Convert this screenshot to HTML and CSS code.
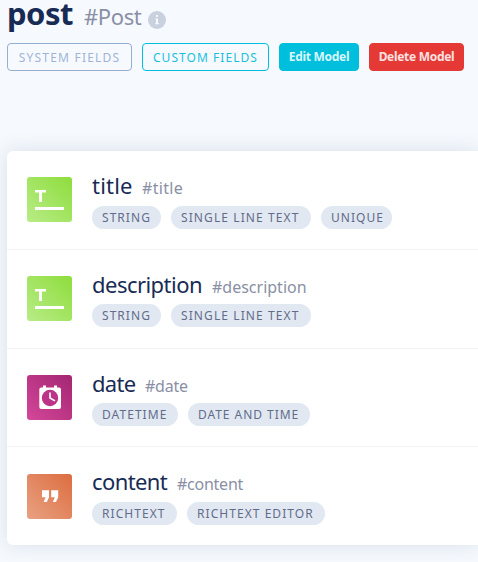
FILE: index.html
```html
<!DOCTYPE html>
<html lang="en">
<head>
<meta charset="utf-8">
<title>post</title>
<link rel="stylesheet" href="styles.css">
</head>
<body>
<header class="heading">
  <h1>post</h1><span class="model-id">#Post</span>
  <svg class="info" viewBox="0 0 18 18"><circle cx="9" cy="9" r="9" fill="#c9d1df"/><path d="M8 4h2v2H8zM7.500 7.500H10V12h.8v1.200H7.200V12H8V8.700h-.5z" fill="#f6faff"/></svg>
</header>
<nav class="actions">
  <button class="btn system">SYSTEM FIELDS</button>
  <button class="btn custom">CUSTOM FIELDS</button>
  <button class="btn edit">Edit Model</button>
  <button class="btn delete">Delete Model</button>
</nav>
<main class="card">
  <section class="row">
    <svg class="icon green" viewBox="0 0 45 45"><path d="M8 13h11v2.600h-4V25h-3v-9.400H8zM8 30h29v3H8z" fill="#fff"/></svg>
    <div class="field">
      <div class="names"><span class="name n-title">title</span><span class="id i-title">#title</span></div>
      <div class="tags"><span class="tag w-string">STRING</span><span class="tag w-line">SINGLE LINE TEXT</span><span class="tag w-unique">UNIQUE</span></div>
    </div>
  </section>
  <section class="row raised">
    <svg class="icon green" viewBox="0 0 45 45"><path d="M8 13h11v2.600h-4V25h-3v-9.400H8zM8 30h29v3H8z" fill="#fff"/></svg>
    <div class="field">
      <div class="names"><span class="name n-description">description</span><span class="id i-description">#description</span></div>
      <div class="tags"><span class="tag w-string">STRING</span><span class="tag w-line">SINGLE LINE TEXT</span></div>
    </div>
  </section>
  <section class="row raised short">
    <svg class="icon pink" viewBox="0 0 45 45"><path d="M16 10.500h3v2h8v-2h3v2h2a2 2 0 0 1 2 2V32a2 2 0 0 1-2 2H14.300a2 2 0 0 1-2-2V14.500a2 2 0 0 1 2-2H16z" fill="#fff"/><circle cx="23" cy="23" r="8.200" fill="#bb3487"/><path d="M23 17.500V23l5 2.900" fill="none" stroke="#fff" stroke-width="1.600"/></svg>
    <div class="field">
      <div class="names"><span class="name n-date">date</span><span class="id i-date">#date</span></div>
      <div class="tags"><span class="tag w-datetime">DATETIME</span><span class="tag w-dateand">DATE AND TIME</span></div>
    </div>
  </section>
  <section class="row short">
    <svg class="icon orange" viewBox="0 0 45 45"><path d="M15 16.300h7v7L19.800 28h-3.200l2-4.700H15zM24.200 16.300h7v7L29 28h-3.200l2-4.700h-3.600z" fill="#fff"/></svg>
    <div class="field">
      <div class="names"><span class="name n-content">content</span><span class="id i-content">#content</span></div>
      <div class="tags"><span class="tag w-rich">RICHTEXT</span><span class="tag w-editor">RICHTEXT EDITOR</span></div>
    </div>
  </section>
</main>
</body>
</html>
```
FILE: styles.css
```css
* { box-sizing: border-box; }
html { background: #f6faff; }
body {
  margin: 0;
  height: 562px;
  overflow: hidden;
  background: #f6faff;
  font-family: "Noto Sans", "Open Sans", sans-serif;
}
.heading {
  display: flex;
  height: 43px;
  padding-left: 7px;
}
h1 {
  margin: 0;
  width: 77px;
  height: 27px;
  font-size: 31px;
  line-height: 27px;
  letter-spacing: -0.5px;
  color: #172b54;
}
.model-id {
  width: 64px;
  font-size: 22px;
  line-height: 32px;
  letter-spacing: -0.4px;
  color: #8a8fa5;
}
.info { width: 18px; height: 18px; margin-top: 11px; }
.actions { display: flex; gap: 10px; padding-left: 7px; }
.btn {
  height: 28px;
  padding: 0;
  border: 1px solid;
  border-radius: 4px;
  background: transparent;
  font: 12px/27px "Noto Sans", sans-serif;
  letter-spacing: 1.2px;
  white-space: nowrap;
}
.system { width: 125px; color: #9fb4d6; border-color: #97adcf; }
.custom { width: 127px; color: #19c0dc; border-color: #00bfdd; letter-spacing: 1.050px; }
.edit, .delete { font-size: 12px; font-weight: 700; line-height: 26px; letter-spacing: -0.300px; }
.edit { width: 80px; background: #00bfdd; border-color: #00bfdd; color: #d9f7fb; }
.delete { width: 95px; background: #e53935; border-color: #e53935; color: #fce1e0; }
.card {
  height: 394px;
  margin: 80px 0 0 7px;
  border-radius: 6px 0 0 6px;
  background: #fff;
  box-shadow: 0 0 20px rgba(50, 65, 85, 0.15);
}
.row {
  display: flex;
  height: 99px;
  padding: 26px 20px 0;
  border-bottom: 1px solid #f0f2f5;
}
.short { height: 98px; }
.row:last-child { border-bottom: 0; }
.icon { flex: none; width: 45px; height: 45px; border-radius: 3px; }
.row:last-child .icon { margin-top: 1px; }
.green { background: linear-gradient(45deg, #b8ec87, #8edd3d); }
.pink { background: linear-gradient(45deg, #d54799, #a32673); }
.orange { background: linear-gradient(45deg, #e9a183, #dc6d3f); }
.field { margin-left: 20px; }
.names {
  display: flex;
  align-items: baseline;
  height: 29px;
  margin-top: -8px;
  line-height: 32px;
  white-space: nowrap;
}
.name { margin-right: 10px; font-size: 22px; color: #172b54; }
.n-title { width: 40px; letter-spacing: 0.200px; }
.n-description { width: 110px; letter-spacing: -0.530px; }
.n-date { width: 43px; letter-spacing: -0.700px; }
.n-content { width: 75px; letter-spacing: -0.600px; }
.id { font-size: 16px; color: #8a8fa5; }
.i-title { letter-spacing: 0.300px; }
.i-date, .i-content { letter-spacing: -0.250px; }
.tags { display: flex; gap: 10px; margin-top: 8px; }
.raised .tags { margin-top: 7px; }
.tag {
  height: 23px;
  padding-left: 10px;
  border-radius: 12px;
  background: #e1e8f2;
  font-size: 12px;
  line-height: 24px;
  letter-spacing: 1.050px;
  white-space: nowrap;
  color: #626c89;
}
.w-string { width: 69px; }
.w-line { width: 140px; letter-spacing: 1.100px; }
.w-unique { width: 71px; }
.w-datetime { width: 86px; }
.w-dateand { width: 122px; letter-spacing: 0.950px; }
.w-rich { width: 85px; }
.w-editor { width: 138px; }
```
